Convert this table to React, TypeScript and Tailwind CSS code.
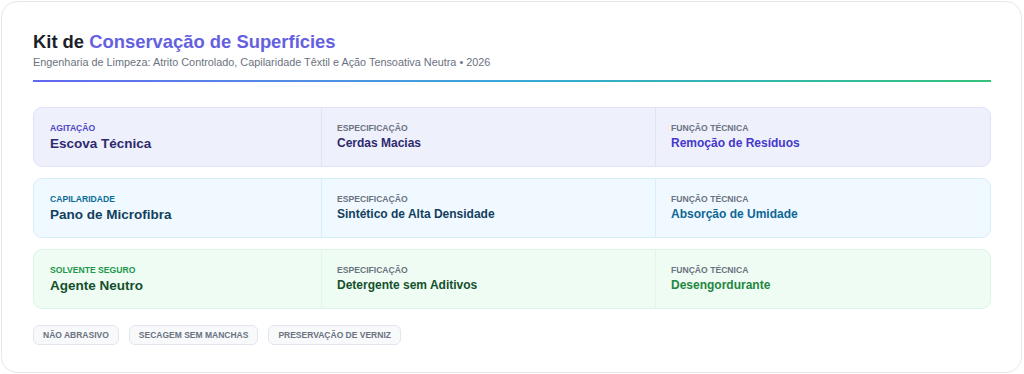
const rows = [
  {
    tag: 'Agitação',
    name: 'Escova Técnica',
    spec: 'Cerdas Macias',
    fn: 'Remoção de Resíduos',
    box: 'bg-[#eef0fc] border-[#dfe3f8]',
    divider: 'border-[#dfe3f8]',
    tagColor: 'text-[#4f46c8]',
    nameColor: 'text-[#2e2a6e]',
    fnColor: 'text-[#4338ca]',
  },
  {
    tag: 'Capilaridade',
    name: 'Pano de Microfibra',
    spec: 'Sintético de Alta Densidade',
    fn: 'Absorção de Umidade',
    box: 'bg-[#f0f9ff] border-[#d6eef9]',
    divider: 'border-[#d6eef9]',
    tagColor: 'text-[#0a6c96]',
    nameColor: 'text-[#123f5e]',
    fnColor: 'text-[#0f6694]',
  },
  {
    tag: 'Solvente Seguro',
    name: 'Agente Neutro',
    spec: 'Detergente sem Aditivos',
    fn: 'Desengordurante',
    box: 'bg-[#effcf3] border-[#dcf5e4]',
    divider: 'border-[#e2f6e8]',
    tagColor: 'text-[#21964a]',
    nameColor: 'text-[#14502d]',
    fnColor: 'text-[#23873f]',
  },
];

const tags = ['Não abrasivo', 'Secagem sem manchas', 'Preservação de verniz'];

export default function App() {
  return (
    <div className="w-[1024px] h-[374px] bg-white p-px font-['Liberation_Sans',Arial,sans-serif]">
      <div className="h-[372px] w-[1021px] rounded-2xl border border-[#e6e8ec] bg-white px-[31px] pt-[29px]">
        {/* Header */}
        <div className="pb-[11px]">
          <h1 className="text-[18.4px] leading-[22px] font-bold text-[#1b1f2a]">
            Kit de <span className="text-[#6461e0]">Conservação de Superfícies</span>
          </h1>
          <p className="mt-[2px] text-[10.85px] leading-[14px] text-[#6b7280]">
            Engenharia de Limpeza: Atrito Controlado, Capilaridade Têxtil e Ação Tensoativa Neutra • 2026
          </p>
        </div>
        <div className="h-[2px] w-[958px] bg-linear-to-r from-[#6366f1] via-[#38a8d8] to-[#34c27a]" />

        {/* Rows */}
        <div className="mt-[25px] flex w-[958px] flex-col gap-[11px]">
          {rows.map((r) => (
            <div
              key={r.name}
              className={`grid h-[60px] grid-cols-[287px_334px_1fr] rounded-[9px] border ${r.box}`}
            >
              <div className="flex flex-col justify-center pl-4">
                <span className={`text-[8.6px] leading-[10px] font-bold uppercase ${r.tagColor}`}>{r.tag}</span>
                <span className={`mt-[2px] text-[13.5px] leading-[17px] font-bold ${r.nameColor}`}>{r.name}</span>
              </div>
              <div className={`flex flex-col justify-center border-l pl-[15px] ${r.divider}`}>
                <span className="text-[8.6px] leading-[10px] font-bold uppercase text-[#6b7280]">Especificação</span>
                <span className={`mt-[2px] text-[12px] leading-[17px] font-bold ${r.nameColor}`}>{r.spec}</span>
              </div>
              <div className={`flex flex-col justify-center border-l pl-[15px] ${r.divider}`}>
                <span className="text-[8.6px] leading-[10px] font-bold uppercase text-[#6b7280]">Função Técnica</span>
                <span className={`mt-[2px] text-[12px] leading-[17px] font-bold ${r.fnColor}`}>{r.fn}</span>
              </div>
            </div>
          ))}
        </div>

        {/* Tags */}
        <div className="mt-[16px] flex gap-[10px]">
          {tags.map((t) => (
            <span
              key={t}
              className="flex h-5 items-center rounded-md border border-[#e2e6ec] bg-[#f7f9fb] px-[9px] text-[8.5px] font-bold uppercase text-[#6b7280]"
            >
              {t}
            </span>
          ))}
        </div>
      </div>
    </div>
  );
}
